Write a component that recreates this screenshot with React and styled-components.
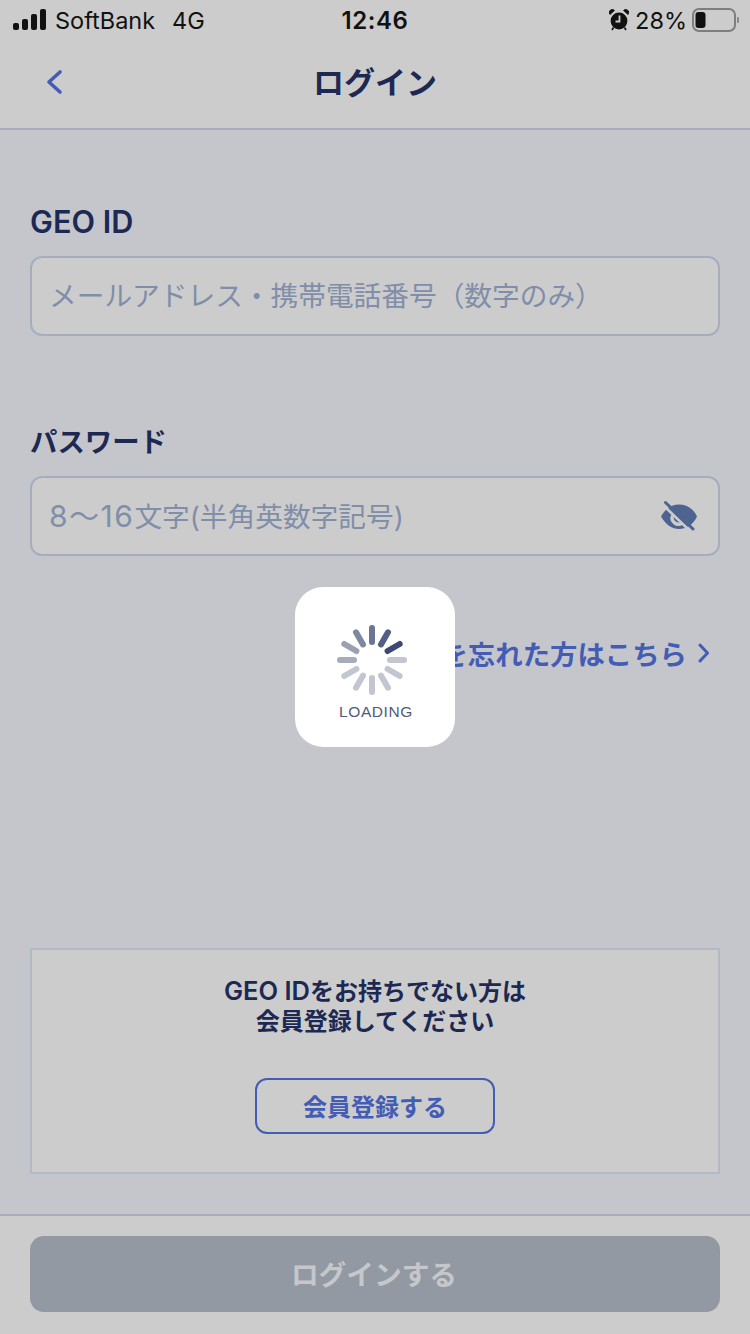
import React from "react";
import styled, { createGlobalStyle } from "styled-components";

const Global = createGlobalStyle`
  html, body { margin: 0; padding: 0; background: #c5c6cc; }
  body { font-family: "Inter", "Noto Sans CJK JP", sans-serif; }
  * { box-sizing: border-box; }
`;

const Page = styled.div`
  width: 750px;
  height: 1334px;
  display: flex;
  flex-direction: column;
  position: relative;
  overflow: hidden;
  background: #c5c6cc;
`;
const Top = styled.header`
  height: 130px;
  background: #cccccc;
  border-bottom: 2px solid #a5adbe;
  display: flex;
  flex-direction: column;
`;
const StatusBar = styled.div`
  height: 40px;
  padding: 0 11px 0 13px;
  display: grid;
  grid-template-columns: 1fr auto 1fr;
  align-items: center;
  color: #111;
  font-size: 23.5px;
  font-family: "Inter", sans-serif;
`;
const StatusLeft = styled.div`
  display: flex;
  align-items: center;
  gap: 8px;
`;
const Carrier = styled.span`
  margin-right: 9px;
`;
const Time = styled.span`
  margin-left: -2px;
  font-size: 24px;
  font-weight: 600;
  letter-spacing: 0.6px;
`;
const StatusRight = styled.div`
  display: flex;
  align-items: center;
  justify-content: flex-end;
  gap: 5px;
`;
const ClockSlot = styled.span`
  display: flex;
  margin-right: 1px;
`;
const NavBar = styled.div`
  flex: 1;
  position: relative;
  display: flex;
  align-items: center;
  justify-content: center;
  padding-bottom: 8px;
`;
const Title = styled.h1`
  margin: 0;
  font-size: 31px;
  font-weight: 700;
  color: #1c2953;
  font-family: "Noto Sans CJK JP", sans-serif;
`;
const BackButton = styled.div`
  position: absolute;
  left: 44px;
  top: 29px;
  display: flex;
`;
const Main = styled.main`
  flex: 1;
  display: flex;
  flex-direction: column;
  padding: 0 30px;
`;
const Label = styled.label`
  display: block;
  color: #1c2953;
  font-size: ${p => p.$size}px;
  font-weight: 600;
  line-height: 40px;
  margin-top: ${p => p.$top}px;
  font-family: "Inter", "Noto Sans CJK JP", sans-serif;
`;
const Field = styled.div`
  margin-top: 14px;
  height: 80px;
  border: 2px solid #a5adbe;
  border-radius: 12px;
  background: #cccccc;
  display: flex;
  align-items: center;
  justify-content: space-between;
  padding: 0 20px 0 17px;
  color: #808ea9;
  font-size: 27.7px;
  font-family: "Inter", "Noto Sans CJK JP", sans-serif;
`;
const FieldText = styled.span`
  padding-bottom: 4px;
`;
const Digits = styled.span`
  font-size: 30px;
  letter-spacing: 1.5px;
`;
const ForgotLink = styled.div`
  margin-top: 77px;
  display: flex;
  justify-content: flex-end;
  align-items: center;
  gap: 11px;
  padding-right: 10px;
  color: #435cb4;
  font-size: 27.4px;
  font-weight: 700;
  line-height: 40px;
  font-family: "Noto Sans CJK JP", sans-serif;
`;
const SignupBox = styled.section`
  margin-top: 275px;
  height: 226px;
  border: 2px solid #b3b9c6;
  background: #cccccc;
  display: flex;
  flex-direction: column;
  align-items: center;
  padding-top: 26px;
`;
const SignupText = styled.p`
  margin: 0;
  text-align: center;
  color: #1c2953;
  font-size: 24px;
  font-weight: 700;
  line-height: 30px;
  font-family: "Inter", "Noto Sans CJK JP", sans-serif;
`;
const SignupLatin = styled.span`
  font-size: 25.5px;
  font-weight: 600;
`;
const SignupButton = styled.div`
  margin-top: 41px;
  width: 240px;
  height: 56px;
  border: 2px solid #435cb4;
  border-radius: 12px;
  display: flex;
  align-items: center;
  justify-content: center;
  padding-bottom: 2px;
  color: #435cb4;
  font-size: 24px;
  font-weight: 700;
  font-family: "Noto Sans CJK JP", sans-serif;
`;
const Footer = styled.footer`
  height: 120px;
  background: #cccccc;
  border-top: 2px solid #a5adbe;
  padding: 20px 30px 0;
`;
const LoginButton = styled.div`
  height: 76px;
  border-radius: 14px;
  background: #9299a3;
  display: flex;
  align-items: center;
  justify-content: center;
  padding: 0 2px 2px 0;
  color: #c6c7ca;
  font-size: 27.7px;
  font-weight: 700;
  font-family: "Noto Sans CJK JP", sans-serif;
`;
const Loader = styled.div`
  position: absolute;
  left: 295px;
  top: 587px;
  width: 160px;
  height: 160px;
  border-radius: 28px;
  background: #fff;
  display: flex;
  flex-direction: column;
  align-items: center;
  padding-top: 37px;
`;
const SpinnerSlot = styled.div`
  display: flex;
  margin-left: -6px;
`;
const LoaderLabel = styled.div`
  margin-top: 6px;
  margin-left: 2px;
  color: #4f5a7c;
  font-size: 15.5px;
  letter-spacing: 0.6px;
  line-height: 20px;
  font-family: "Liberation Sans", sans-serif;
`;

const Signal = () => (
  <svg width="34" height="22" viewBox="0 0 34 22">
    <rect x="0" y="14" width="6" height="7" rx="2" fill="#111" />
    <rect x="9" y="10" width="6" height="11" rx="2" fill="#111" />
    <rect x="18" y="5" width="6" height="16" rx="2" fill="#111" />
    <rect x="27" y="0" width="6" height="21" rx="2" fill="#111" />
  </svg>
);
const Alarm = () => (
  <svg width="20" height="22" viewBox="0 0 20 22">
    <circle cx="10" cy="12" r="8.4" fill="#111" />
    <path d="M1 5.5 L5.5 1.5 A3 3 0 0 0 1 5.5Z M19 5.5 L14.5 1.5 A3 3 0 0 1 19 5.5Z" fill="#111" stroke="#111" strokeWidth="0.8" />
    <path d="M4.5 18.5 L3 21 M15.5 18.5 L17 21" stroke="#111" strokeWidth="1.6" />
    <path d="M10.5 6.5 V12.5 H6.5" stroke="#ccc" strokeWidth="1.8" fill="none" />
  </svg>
);
const Battery = () => (
  <svg width="47" height="24" viewBox="0 0 47 24">
    <rect x="1" y="1" width="42" height="22" rx="6" fill="none" stroke="#7e7e7e" strokeWidth="2" />
    <rect x="3.5" y="4" width="10" height="16" rx="3" fill="#111" />
    <path d="M45 9 a3 3 0 0 1 0 6 Z" fill="#8a8a8a" />
  </svg>
);
const Back = () => (
  <svg width="20" height="26" viewBox="0 0 20 26">
    <path d="M16 3 L5 13 L16 23" fill="none" stroke="#435cb4" strokeWidth="3.6" strokeLinecap="round" strokeLinejoin="round" />
  </svg>
);
const EyeOff = () => (
  <svg width="38" height="32" viewBox="0 0 38 32">
    <path d="M1 16.5 C6 8 12 4.5 19 4.5 C26 4.5 33 8 37 16.5 C33 25 26 29 19 29 C12 29 6 25 1 16.5Z" fill="#4d6390" />
    <path d="M11 15 a8 8 0 0 0 12 9.5 l-2 -2.5 a5 5 0 0 1 -7 -6 Z" fill="#cccccc" />
    <path d="M2.5 4.5 L30.5 31.5" stroke="#cccccc" strokeWidth="2.6" />
    <path d="M5.5 2.5 L33 29" stroke="#4d6390" strokeWidth="3" strokeLinecap="round" />
  </svg>
);
const Chevron = () => (
  <svg width="12" height="22" viewBox="0 0 12 22">
    <path d="M2 3 L9.5 11 L2 19" fill="none" stroke="#435cb4" strokeWidth="3" strokeLinecap="round" strokeLinejoin="round" />
  </svg>
);

const spokes = [
  "#6c7591", "#545f86", "#3c4a73", "#c2c6d1", "#c2c6d1", "#c2c6d1",
  "#c2c6d1", "#c2c6d1", "#c2c6d1", "#a6acbc", "#9aa1b4", "#7e87a0",
];
const Spinner = () => (
  <svg width="72" height="72" viewBox="-36 -36 72 72">
    {spokes.map((c, i) => (
      <line key={i} x1="0" y1="-18" x2="0" y2="-32" stroke={c} strokeWidth="6" strokeLinecap="round" transform={`rotate(${i * 30})`} />
    ))}
  </svg>
);

export default function App() {
  return (
    <Page>
      <Global />
      <Top>
        <StatusBar>
          <StatusLeft>
            <Signal />
            <Carrier>SoftBank</Carrier>
            <span>4G</span>
          </StatusLeft>
          <Time>12:46</Time>
          <StatusRight>
            <ClockSlot><Alarm /></ClockSlot>
            <span>28%</span>
            <Battery />
          </StatusRight>
        </StatusBar>
        <NavBar>
          <BackButton><Back /></BackButton>
          <Title>ログイン</Title>
        </NavBar>
      </Top>
      <Main>
        <Label $top={72} $size={30.6}>GEO ID</Label>
        <Field><FieldText>メールアドレス・携帯電話番号（数字のみ）</FieldText></Field>
        <Label $top={86} $size={27.4}>パスワード</Label>
        <Field>
          <FieldText><Digits>8〜16</Digits>文字(半角英数字記号)</FieldText>
          <EyeOff />
        </Field>
        <ForgotLink>
          <span>パスワードを忘れた方はこちら</span>
          <Chevron />
        </ForgotLink>
        <SignupBox>
          <SignupText><SignupLatin>GEO ID</SignupLatin>をお持ちでない方は<br />会員登録してください</SignupText>
          <SignupButton>会員登録する</SignupButton>
        </SignupBox>
      </Main>
      <Footer>
        <LoginButton>ログインする</LoginButton>
      </Footer>
      <Loader>
        <SpinnerSlot><Spinner /></SpinnerSlot>
        <LoaderLabel>LOADING</LoaderLabel>
      </Loader>
    </Page>
  );
}
